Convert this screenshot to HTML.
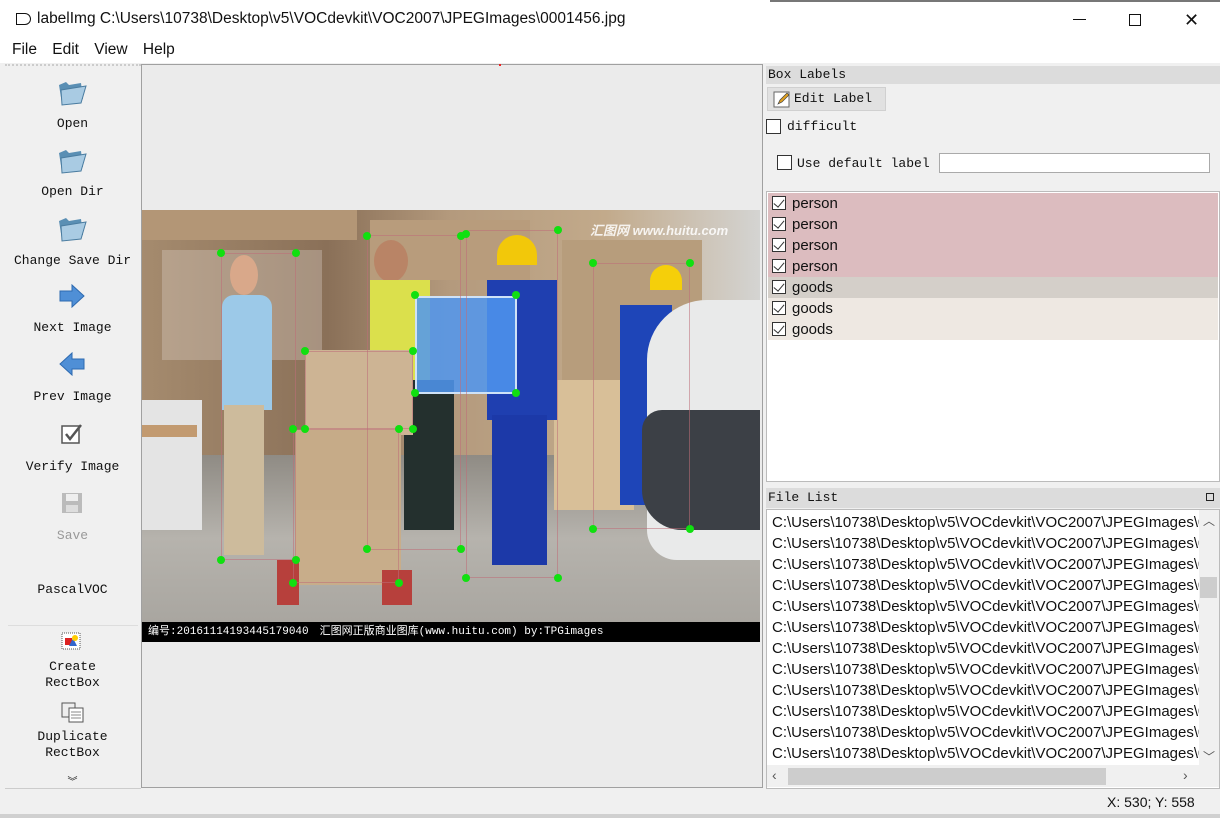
<!DOCTYPE html>
<html><head><meta charset="utf-8">
<style>
*{margin:0;padding:0;box-sizing:border-box}
body{width:1220px;height:818px;position:relative;background:#f0f0f0;overflow:hidden;font-family:"Liberation Sans","Noto Sans CJK SC",sans-serif}
.a{position:absolute}
.mono{font-family:"Liberation Mono","Noto Sans CJK SC",monospace;font-size:13px;color:#111}
.tb{position:absolute;left:5px;width:135px;text-align:center}
.dot{position:absolute;width:8px;height:8px;border-radius:50%;background:#10e010;margin:-4px 0 0 -4px}
.bx{position:absolute;border:1px solid rgba(190,110,120,.55)}
.row{position:absolute;left:768px;width:450px;height:21px;font-size:15px;line-height:21px;padding-left:24px;color:#111}
.cb{position:absolute;left:4px;top:3px;width:14px;height:14px;border:1px solid #333;background:#fff}
.cb:after{content:"";position:absolute;left:3px;top:0px;width:5px;height:9px;border:solid #333;border-width:0 1.5px 1.5px 0;transform:rotate(40deg)}
.fr{position:absolute;left:772px;font-size:15px;height:21px;line-height:21px;color:#111;white-space:nowrap;width:427px;overflow:hidden}
</style></head><body>
<div class="a" style="left:0;top:0;width:1220px;height:37px;background:#fff"></div>
<div class="a" style="left:770px;top:0;width:450px;height:2px;background:#777"></div>
<div class="a" style="left:16px;top:13px;width:15px;height:12px;border:1.5px solid #111;border-radius:0 6px 6px 0"></div>
<div class="a" style="left:37px;top:10px;font-size:15.5px;color:#111">labelImg C:\Users\10738\Desktop\v5\VOCdevkit\VOC2007\JPEGImages\0001456.jpg</div>
<div class="a" style="left:1073px;top:19px;width:13px;height:1px;background:#111"></div>
<div class="a" style="left:1129px;top:14px;width:12px;height:12px;border:1px solid #111"></div>
<div class="a" style="left:1184px;top:13px;font-size:18px;color:#111;line-height:14px">✕</div>
<div class="a" style="left:0;top:37px;width:1220px;height:26px;background:#fff"></div>
<div class="a" style="left:12px;top:41px;font-size:15.5px;color:#111;word-spacing:11px">File Edit View Help</div>
<div class="a" style="left:5px;top:64px;width:136px;height:724px;background:#f0f0f0;border-top:2px dotted #ccc"></div>
<svg class="a" style="left:56px;top:77px" width="32" height="30"><path d="M3 8 L10 5 L13 8 L25 6 L27 22 L6 27 Z" fill="#5a8fb4"/><path d="M5 13 L30 9 L25 26 L6 28 Z" fill="#a9cbe3" stroke="#4a7ca0"/></svg>
<div class="tb mono" style="top:116px">Open</div>
<svg class="a" style="left:56px;top:145px" width="32" height="30"><path d="M3 8 L10 5 L13 8 L25 6 L27 22 L6 27 Z" fill="#5a8fb4"/><path d="M5 13 L30 9 L25 26 L6 28 Z" fill="#a9cbe3" stroke="#4a7ca0"/></svg>
<div class="tb mono" style="top:184px">Open Dir</div>
<svg class="a" style="left:56px;top:213px" width="32" height="30"><path d="M3 8 L10 5 L13 8 L25 6 L27 22 L6 27 Z" fill="#5a8fb4"/><path d="M5 13 L30 9 L25 26 L6 28 Z" fill="#a9cbe3" stroke="#4a7ca0"/></svg>
<div class="tb mono" style="top:253px">Change Save Dir</div>
<svg class="a" style="left:58px;top:284px" width="28" height="24"><path d="M2 7 H14 V1 L26 12 L14 23 V17 H2 Z" fill="#4f8fd6" stroke="#2d6ab0"/></svg>
<div class="tb mono" style="top:320px">Next Image</div>
<svg class="a" style="left:58px;top:352px" width="28" height="24"><path d="M26 7 H14 V1 L2 12 L14 23 V17 H26 Z" fill="#4f8fd6" stroke="#2d6ab0"/></svg>
<div class="tb mono" style="top:389px">Prev Image</div>
<svg class="a" style="left:60px;top:422px" width="24" height="24"><rect x="2" y="4" width="17" height="17" fill="#fff" stroke="#555" stroke-width="1.5"/><path d="M6 12 L10 17 L21 3" fill="none" stroke="#555" stroke-width="2.5"/></svg>
<div class="tb mono" style="top:459px">Verify Image</div>
<svg class="a" style="left:61px;top:492px" width="22" height="22"><rect x="1" y="1" width="20" height="20" fill="#bbb"/><rect x="5" y="2" width="12" height="7" fill="#eee"/><rect x="5" y="13" width="12" height="7" fill="#ddd"/></svg>
<div class="tb mono" style="top:528px;color:#999">Save</div>
<div class="tb mono" style="top:582px">PascalVOC</div>
<div class="a" style="left:8px;top:625px;width:130px;height:1px;background:#ddd"></div>
<svg class="a" style="left:61px;top:632px" width="24" height="22"><rect x="1" y="1" width="18" height="16" fill="#fff" stroke="#555" stroke-dasharray="1 1"/><rect x="4" y="6" width="7" height="7" fill="#d22"/><path d="M8 14 L12 6 L16 14Z" fill="#36c"/><circle cx="14" cy="6" r="3" fill="#fc0"/></svg>
<div class="tb mono" style="top:659px;line-height:16px">Create<br>RectBox</div>
<svg class="a" style="left:61px;top:702px" width="24" height="22"><rect x="1" y="1" width="13" height="14" fill="#eee" stroke="#555"/><rect x="8" y="6" width="14" height="14" fill="#fff" stroke="#555"/><path d="M10 10h10M10 13h10M10 16h10" stroke="#888"/></svg>
<div class="tb mono" style="top:729px;line-height:16px">Duplicate<br>RectBox</div>
<div class="tb mono" style="top:773px;font-size:10px">︾</div>
<div class="a" style="left:5px;top:788px;width:136px;height:1px;background:#ccc"></div>
<div class="a" style="left:141px;top:64px;width:622px;height:724px;background:#ebebeb;border:1px solid #a0a0a0"></div>
<div class="a" style="left:499px;top:64px;width:2px;height:2px;background:#e22"></div>
<div class="a" style="left:142px;top:210px;width:618px;height:412px;overflow:hidden;background:#9c8266">
 <div class="a" style="left:0;top:0;width:618px;height:250px;background:linear-gradient(90deg,#a58b6e,#8a7058 30%,#b49a7d 50%,#c2aa8b 75%,#d4d4d2)"></div>
 <div class="a" style="left:0;top:245px;width:618px;height:167px;background:linear-gradient(#8f8b84,#b6b3ad 50%,#a9a6a0)"></div>
 <div class="a" style="left:0;top:0;width:215px;height:30px;background:#b39676"></div>
 <div class="a" style="left:20px;top:40px;width:160px;height:110px;background:rgba(220,210,200,.35)"></div>
 <div class="a" style="left:228px;top:10px;width:160px;height:60px;background:#b89c7c"></div>
 <div class="a" style="left:420px;top:30px;width:140px;height:160px;background:#b79d7c"></div>
 <div class="a" style="left:412px;top:170px;width:80px;height:130px;background:#d8bf98"></div>
 <div class="a" style="left:80px;top:85px;width:50px;height:115px;background:#9cc9e8;border-radius:12px 12px 0 0"></div>
 <div class="a" style="left:82px;top:195px;width:40px;height:150px;background:#cdbb9c"></div>
 <div class="a" style="left:88px;top:45px;width:28px;height:40px;background:#d9a88a;border-radius:50%"></div>
 <div class="a" style="left:232px;top:30px;width:34px;height:42px;background:#b98466;border-radius:50%"></div>
 <div class="a" style="left:228px;top:70px;width:60px;height:100px;background:#dbe04c"></div>
 <div class="a" style="left:262px;top:170px;width:50px;height:150px;background:#24302e"></div>
 <div class="a" style="left:355px;top:25px;width:40px;height:30px;background:#f2c80a;border-radius:20px 20px 0 0"></div>
 <div class="a" style="left:345px;top:70px;width:70px;height:140px;background:#1f3fb0"></div>
 <div class="a" style="left:350px;top:205px;width:55px;height:150px;background:#1c39a8"></div>
 <div class="a" style="left:508px;top:55px;width:32px;height:25px;background:#f5cf0a;border-radius:16px 16px 0 0"></div>
 <div class="a" style="left:478px;top:95px;width:52px;height:200px;background:#1e45b8"></div>
 <div class="a" style="left:505px;top:90px;width:130px;height:260px;background:#e9eaea;border-radius:60px 0 0 30px"></div>
 <div class="a" style="left:500px;top:200px;width:130px;height:120px;background:#3c4046;border-radius:20px 0 0 40px"></div>
 <div class="a" style="left:163px;top:140px;width:108px;height:85px;background:#cdb494"></div>
 <div class="a" style="left:153px;top:220px;width:106px;height:85px;background:#c6ab88"></div>
 <div class="a" style="left:153px;top:300px;width:106px;height:75px;background:#c8ad8a"></div>
 <div class="a" style="left:135px;top:350px;width:22px;height:45px;background:#b7403c"></div>
 <div class="a" style="left:240px;top:360px;width:30px;height:35px;background:#b7403c"></div>
 <div class="a" style="left:0;top:190px;width:60px;height:130px;background:#e4e4e4"></div>
 <div class="a" style="left:0;top:215px;width:55px;height:12px;background:#c29a70"></div>
 <div class="a" style="left:448px;top:10px;font-size:13px;font-style:italic;font-weight:bold;color:rgba(255,255,255,.85)">汇图网 www.huitu.com</div>
 <div class="a" style="left:273px;top:86px;width:102px;height:98px;background:rgba(80,150,240,.85);border:2px solid #cfe2f7"></div>
</div>
<div class="a" style="left:142px;top:622px;width:618px;height:20px;background:#000;color:#fff;font-size:11px;line-height:20px;padding-left:6px;white-space:nowrap;font-family:'Liberation Mono','Noto Sans CJK SC',monospace">编号:20161114193445179040　汇图网正版商业图库(www.huitu.com) by:TPGimages</div>
<div class="bx" style="left:221px;top:253px;width:75px;height:307px"></div>
<div class="bx" style="left:367px;top:235px;width:94px;height:315px"></div>
<div class="bx" style="left:466px;top:230px;width:92px;height:348px"></div>
<div class="bx" style="left:593px;top:263px;width:97px;height:266px"></div>
<div class="bx" style="left:305px;top:351px;width:108px;height:78px"></div>
<div class="bx" style="left:293px;top:429px;width:106px;height:154px"></div>
<div class="dot" style="left:221px;top:253px"></div><div class="dot" style="left:296px;top:253px"></div><div class="dot" style="left:221px;top:560px"></div><div class="dot" style="left:296px;top:560px"></div>
<div class="dot" style="left:367px;top:236px"></div><div class="dot" style="left:461px;top:236px"></div><div class="dot" style="left:367px;top:549px"></div><div class="dot" style="left:461px;top:549px"></div>
<div class="dot" style="left:466px;top:234px"></div><div class="dot" style="left:558px;top:230px"></div><div class="dot" style="left:466px;top:578px"></div><div class="dot" style="left:558px;top:578px"></div>
<div class="dot" style="left:593px;top:263px"></div><div class="dot" style="left:690px;top:263px"></div><div class="dot" style="left:593px;top:529px"></div><div class="dot" style="left:690px;top:529px"></div>
<div class="dot" style="left:305px;top:351px"></div><div class="dot" style="left:413px;top:351px"></div><div class="dot" style="left:305px;top:429px"></div><div class="dot" style="left:413px;top:429px"></div>
<div class="dot" style="left:293px;top:429px"></div><div class="dot" style="left:399px;top:429px"></div><div class="dot" style="left:293px;top:583px"></div><div class="dot" style="left:399px;top:583px"></div>
<div class="dot" style="left:415px;top:295px"></div><div class="dot" style="left:516px;top:295px"></div><div class="dot" style="left:415px;top:393px"></div><div class="dot" style="left:516px;top:393px"></div>
<div class="a" style="left:766px;top:66px;width:454px;height:18px;background:#dcdcdc"></div>
<div class="a mono" style="left:768px;top:67px">Box Labels</div>
<div class="a" style="left:767px;top:87px;width:119px;height:24px;background:#e1e1e1;border:1px solid #d0d0d0"></div>
<svg class="a" style="left:773px;top:91px" width="18" height="18"><rect x="1" y="1" width="15" height="15" fill="#fff" stroke="#666"/><path d="M5 13 L7 9 L14 2 L16 4 L9 11 Z" fill="#e0a020" stroke="#444" stroke-width=".7"/></svg>
<div class="a mono" style="left:794px;top:91px">Edit Label</div>
<div class="a" style="left:766px;top:119px;width:15px;height:15px;border:1px solid #333;background:#fff"></div>
<div class="a mono" style="left:787px;top:119px">difficult</div>
<div class="a" style="left:777px;top:155px;width:15px;height:15px;border:1px solid #333;background:#fff"></div>
<div class="a mono" style="left:797px;top:156px">Use default label</div>
<div class="a" style="left:939px;top:153px;width:271px;height:20px;border:1px solid #aaa;background:#fff"></div>
<div class="a" style="left:766px;top:191px;width:454px;height:291px;background:#fff;border:1px solid #bbb"></div>
<div class="row" style="top:193px;background:#dcbcbf"><span class="cb"></span>person</div>
<div class="row" style="top:214px;background:#dcbcbf"><span class="cb"></span>person</div>
<div class="row" style="top:235px;background:#dcbcbf"><span class="cb"></span>person</div>
<div class="row" style="top:256px;background:#dcbcbf"><span class="cb"></span>person</div>
<div class="row" style="top:277px;background:#d4cfc9"><span class="cb"></span>goods</div>
<div class="row" style="top:298px;background:#eee8e2"><span class="cb"></span>goods</div>
<div class="row" style="top:319px;background:#eee8e2"><span class="cb"></span>goods</div>
<div class="a" style="left:766px;top:488px;width:454px;height:20px;background:#dcdcdc"></div>
<div class="a mono" style="left:768px;top:490px">File List</div>
<div class="a" style="left:1206px;top:493px;width:8px;height:8px;border:1.5px solid #222"></div>
<div class="a" style="left:766px;top:509px;width:454px;height:280px;background:#fff;border:1px solid #bbb"></div>
<div class="fr" style="top:512px">C:\Users\10738\Desktop\v5\VOCdevkit\VOC2007\JPEGImages\0001456.jpg</div>
<div class="fr" style="top:533px">C:\Users\10738\Desktop\v5\VOCdevkit\VOC2007\JPEGImages\0001457.jpg</div>
<div class="fr" style="top:554px">C:\Users\10738\Desktop\v5\VOCdevkit\VOC2007\JPEGImages\0001458.jpg</div>
<div class="fr" style="top:575px">C:\Users\10738\Desktop\v5\VOCdevkit\VOC2007\JPEGImages\0001459.jpg</div>
<div class="fr" style="top:596px">C:\Users\10738\Desktop\v5\VOCdevkit\VOC2007\JPEGImages\0001460.jpg</div>
<div class="fr" style="top:617px">C:\Users\10738\Desktop\v5\VOCdevkit\VOC2007\JPEGImages\0001461.jpg</div>
<div class="fr" style="top:638px">C:\Users\10738\Desktop\v5\VOCdevkit\VOC2007\JPEGImages\0001462.jpg</div>
<div class="fr" style="top:659px">C:\Users\10738\Desktop\v5\VOCdevkit\VOC2007\JPEGImages\0001463.jpg</div>
<div class="fr" style="top:680px">C:\Users\10738\Desktop\v5\VOCdevkit\VOC2007\JPEGImages\0001464.jpg</div>
<div class="fr" style="top:701px">C:\Users\10738\Desktop\v5\VOCdevkit\VOC2007\JPEGImages\0001465.jpg</div>
<div class="fr" style="top:722px">C:\Users\10738\Desktop\v5\VOCdevkit\VOC2007\JPEGImages\0001466.jpg</div>
<div class="fr" style="top:743px">C:\Users\10738\Desktop\v5\VOCdevkit\VOC2007\JPEGImages\0001467.jpg</div>
<div class="a" style="left:1199px;top:510px;width:20px;height:255px;background:#f0f0f0"></div>
<div class="a" style="left:1200px;top:577px;width:17px;height:21px;background:#cdcdcd"></div>
<div class="a" style="left:1203px;top:512px;font-size:12px;color:#555">︿</div>
<div class="a" style="left:1203px;top:748px;font-size:12px;color:#555">﹀</div>
<div class="a" style="left:767px;top:765px;width:452px;height:22px;background:#f0f0f0"></div>
<div class="a" style="left:788px;top:768px;width:318px;height:17px;background:#cdcdcd"></div>
<div class="a" style="left:772px;top:767px;font-size:14px;color:#555">‹</div>
<div class="a" style="left:1183px;top:767px;font-size:14px;color:#555">›</div>
<div class="a" style="left:1107px;top:794px;font-size:14px;color:#111">X: 530; Y: 558</div>
<div class="a" style="left:0;top:814px;width:1220px;height:4px;background:#d0d0d0"></div>
</body></html>
